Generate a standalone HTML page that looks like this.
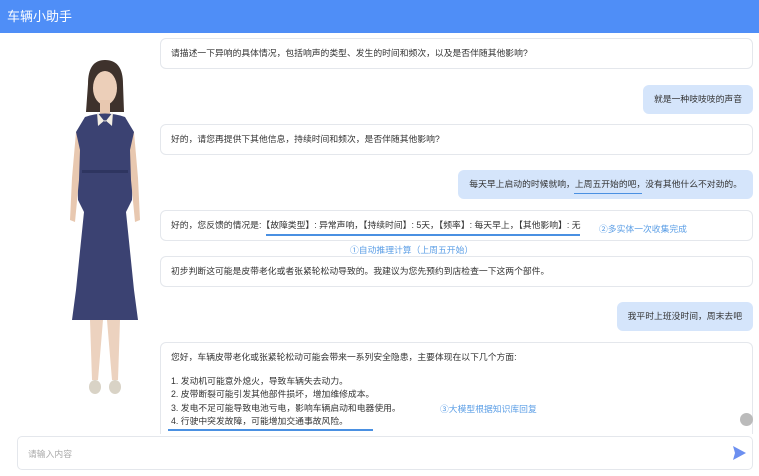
<html><head><style>
body{margin:0;width:759px;height:476px;overflow:hidden;background:#fff;font-family:"Liberation Sans","Noto Sans CJK SC",sans-serif;font-size:8.8px;color:#333;position:relative}
.h{position:absolute;left:0;top:0;width:759px;height:33px;background:#4f8ef7;color:#fff;font-size:13px;line-height:33px;padding-left:7px;box-sizing:border-box}
.b{position:absolute;left:160px;width:593px;border:1px solid #e4e7ec;border-radius:6px;box-sizing:border-box;padding-left:10px;line-height:28px;background:#fff}
.u{position:absolute;background:#d5e5fb;border-radius:6px;line-height:29px;padding:0 11px;right:6px}
.a{position:absolute;color:#5b9ee6;font-size:8.8px}
.ln{position:absolute;height:2px;background:#4a90e2}
</style></head><body>
<div class="h">车辆小助手</div>
<svg style="position:absolute;left:60px;top:60px" width="90" height="340">
<path d="M28 24 Q28 0 45 0 Q63 0 63 24 L64 52 L26 52Z" fill="#3e322c"/>
<ellipse cx="45" cy="28" rx="12" ry="17" fill="#eccfb9"/>
<rect x="40" y="40" width="10" height="14" fill="#e8c8b0"/>
<path d="M25 57 Q45 50 65 57 L74 72 L72 140 L66 152 L74 230 L78 260 L12 260 L16 230 L24 152 L18 140 L16 72Z" fill="#3b4272"/>
<path d="M37 52 L45 62 L53 52 L52 66 L45 60 L38 66Z" fill="#f3eee4"/>
<path d="M16 72 L12 118 L10 160 L15 162 L19 120 L20 90Z M74 72 L78 118 L80 160 L75 162 L71 120 L70 90Z" fill="#e8c8b0"/>
<rect x="22" y="110" width="46" height="3" fill="#2e3560"/>
<path d="M30 260 L32 320 L38 320 L43 260Z M47 260 L52 320 L58 320 L60 260Z" fill="#ecd2bf"/>
<ellipse cx="35" cy="327" rx="6" ry="7" fill="#d9d3c6"/><ellipse cx="55" cy="327" rx="6" ry="7" fill="#d9d3c6"/>
</svg>
<div class="b" style="top:38px;height:31px">请描述一下异响的具体情况，包括响声的类型、发生的时间和频次，以及是否伴随其他影响?</div>
<div class="u" style="top:85px">就是一种吱吱吱的声音</div>
<div class="b" style="top:124px;height:31px">好的，请您再提供下其他信息，持续时间和频次，是否伴随其他影响?</div>
<div class="u" style="top:170px">每天早上启动的时候就响，上周五开始的吧，没有其他什么不对劲的。</div>
<div class="ln" style="left:574px;top:193px;width:68px;height:1px"></div>
<div class="b" style="top:210px;height:31px">好的，您反馈的情况是:【故障类型】: 异常声响，【持续时间】: 5天，【频率】: 每天早上，【其他影响】: 无</div>
<div class="ln" style="left:266px;top:234px;width:314px"></div>
<div class="a" style="left:599px;top:222px">②多实体一次收集完成</div>
<div class="a" style="left:350px;top:243px">①自动推理计算（上周五开始）</div>
<div class="b" style="top:256px;height:31px">初步判断这可能是皮带老化或者张紧轮松动导致的。我建议为您先预约到店检查一下这两个部件。</div>
<div class="u" style="top:302px">我平时上班没时间，周末去吧</div>
<div class="b" style="top:342px;height:92px;line-height:13.5px;padding-top:8px;border-bottom:none;border-radius:6px 6px 0 0;overflow:hidden">您好，车辆皮带老化或张紧轮松动可能会带来一系列安全隐患，主要体现在以下几个方面:<br><div style="height:10px"></div>1. 发动机可能意外熄火，导致车辆失去动力。<br>2. 皮带断裂可能引发其他部件损坏，增加维修成本。<br>3. 发电不足可能导致电池亏电，影响车辆启动和电器使用。<br>4. 行驶中突发故障，可能增加交通事故风险。</div>
<div class="a" style="left:440px;top:402px">③大模型根据知识库回复</div>
<div class="ln" style="left:168px;top:429px;width:205px"></div>
<div style="position:absolute;left:740px;top:413px;width:13px;height:13px;border-radius:50%;background:#bbb"></div>
<div style="position:absolute;left:17px;top:436px;width:736px;height:34px;border:1px solid #e4e7ec;border-radius:5px;box-sizing:border-box;line-height:34px;padding-left:10px;color:#aaa">请输入内容</div>
<svg style="position:absolute;left:733px;top:446px" width="13" height="14"><path d="M0 0 L13 7 L0 14 L2 7Z" fill="#6c8ff0"/></svg>
</body></html>
